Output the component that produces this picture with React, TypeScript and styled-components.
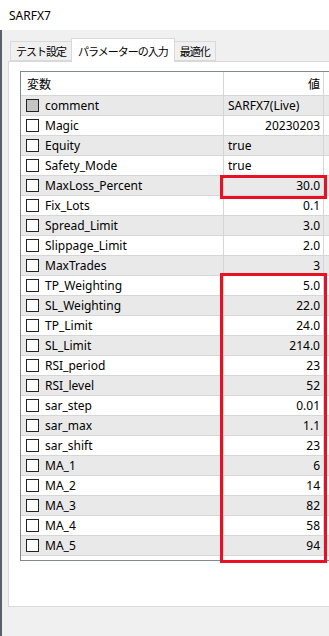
import styled, { createGlobalStyle } from "styled-components"

const GlobalStyle = createGlobalStyle`
  html, body {
    margin: 0;
    padding: 0;
    background: #f0f0f0;
    font-family: "Segoe UI", "Noto Sans", "Noto Sans CJK JP", sans-serif;
    font-size: 12px;
    color: #000;
    overflow: hidden;
  }
`

const Window = styled.div`
  width: 329px;
  height: 636px;
  display: flex;
  flex-direction: column;
  position: relative;
  overflow: hidden;
`
const TitleBar = styled.div`
  height: 30px;
  background: #fff;
  display: flex;
  align-items: center;
  padding-left: 9px;
  font-size: 12px;
  flex-shrink: 0;
`
const Body = styled.div`
  flex: 1;
  border-left: 2px solid #58616b;
  padding: 8px 0 0 6px;
  display: flex;
  flex-direction: column;
`
const TabRow = styled.div`
  display: flex;
  align-items: flex-end;
  height: 23px;
  padding-left: 2px;
`
const Tab = styled.div<{ $active?: boolean }>`
  height: ${p => (p.$active ? 24 : 20)}px;
  padding: 0 ${p => (p.$active ? 6 : 5)}px;
  margin: 0 ${p => (p.$active ? -1 : 0)}px ${p => (p.$active ? -1 : 0)}px;
  background: ${p => (p.$active ? "#fff" : "#f0f0f0")};
  border: 1px solid #d9d9d9;
  border-bottom: ${p => (p.$active ? "none" : "1px solid #d9d9d9")};
  display: flex;
  align-items: center;
  font-size: 11px;
  letter-spacing: -1px;
  position: relative;
  z-index: ${p => (p.$active ? 2 : 1)};
  box-sizing: border-box;
`
const Panel = styled.div`
  width: 340px;
  height: 546px;
  box-sizing: border-box;
  background: #fff;
  border: 1px solid #d9d9d9;
  padding: 9px 0 0 11px;
`
const Grid = styled.div`
  width: 320px;
  height: 490px;
  box-sizing: border-box;
  border: 1px solid #828790;
  background: #fff;
  display: flex;
  flex-direction: column;
`
const Row = styled.div<{ $alt?: boolean; $header?: boolean }>`
  display: grid;
  grid-template-columns: 203px 100px;
  height: ${p => (p.$header ? 24 : 20)}px;
  box-sizing: border-box;
  background: ${p => (p.$alt ? "#e9e9e9" : "#fff")};
  border-bottom: 1px solid #d6d6d6;
`
const NameCell = styled.div`
  display: flex;
  align-items: center;
  gap: 6px;
  padding-left: 5px;
  border-right: 1px solid #d6d6d6;
  white-space: nowrap;
`
const HeadName = styled.div`
  display: flex;
  align-items: center;
  padding-left: 6px;
  border-right: 1px solid #d6d6d6;
`
const ValueCell = styled.div<{ $left?: boolean }>`
  display: flex;
  align-items: center;
  justify-content: ${p => (p.$left ? "flex-start" : "flex-end")};
  padding: 0 3px 0 4px;
  border-right: 1px solid #d6d6d6;
  white-space: nowrap;
`
const Check = styled.span<{ $disabled?: boolean }>`
  width: 13px;
  height: 13px;
  box-sizing: border-box;
  border: 1px solid #222;
  background: ${p => (p.$disabled ? "#c4c4c4" : "#fff")};
  flex-shrink: 0;
`
const Highlight = styled.div`
  position: absolute;
  border: 3px solid #e81123;
  box-sizing: border-box;
  pointer-events: none;
`

const params: [string, string, boolean?][] = [
  ["comment", "SARFX7(Live)", true],
  ["Magic", "20230203"],
  ["Equity", "true", true],
  ["Safety_Mode", "true", true],
  ["MaxLoss_Percent", "30.0"],
  ["Fix_Lots", "0.1"],
  ["Spread_Limit", "3.0"],
  ["Slippage_Limit", "2.0"],
  ["MaxTrades", "3"],
  ["TP_Weighting", "5.0"],
  ["SL_Weighting", "22.0"],
  ["TP_Limit", "24.0"],
  ["SL_Limit", "214.0"],
  ["RSI_period", "23"],
  ["RSI_level", "52"],
  ["sar_step", "0.01"],
  ["sar_max", "1.1"],
  ["sar_shift", "23"],
  ["MA_1", "6"],
  ["MA_2", "14"],
  ["MA_3", "82"],
  ["MA_4", "58"],
  ["MA_5", "94"],
]

const App = () => {
  return (
    <Window>
      <GlobalStyle />
      <TitleBar>SARFX7</TitleBar>
      <Body>
        <TabRow>
          <Tab>テスト設定</Tab>
          <Tab $active>パラメーターの入力</Tab>
          <Tab>最適化</Tab>
        </TabRow>
        <Panel>
          <Grid>
            <Row $header>
              <HeadName>変数</HeadName>
              <ValueCell>値</ValueCell>
            </Row>
            {params.map(([name, value, left], i) => (
              <Row key={name} $alt={i % 2 === 0}>
                <NameCell>
                  <Check $disabled={i === 0} />
                  {name}
                </NameCell>
                <ValueCell $left={left}>{value}</ValueCell>
              </Row>
            ))}
          </Grid>
        </Panel>
      </Body>
      <Highlight style={{ left: 220, top: 175, width: 107, height: 24 }} />
      <Highlight style={{ left: 220, top: 273, width: 107, height: 290 }} />
    </Window>
  )
}

export default App
